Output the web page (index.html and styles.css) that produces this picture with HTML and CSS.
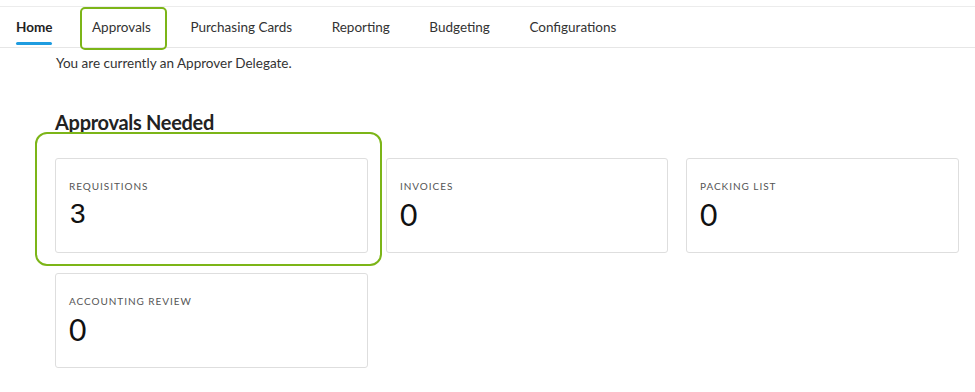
FILE: index.html
```html
<!DOCTYPE html>
<html lang="en">
<head>
    <meta charset="UTF-8">
    <meta name="viewport" content="width=device-width, initial-scale=1.0">
    <title>Approvals</title>
    <link rel="stylesheet" href="styles.css">
</head>
<body>
    <!-- top navigation -->
    <div class="nav">
        <a class="nav-item active"><span>Home</span></a>
        <a class="nav-item marked"><span>Approvals</span></a>
        <a class="nav-item"><span>Purchasing Cards</span></a>
        <a class="nav-item"><span>Reporting</span></a>
        <a class="nav-item"><span>Budgeting</span></a>
        <a class="nav-item"><span>Configurations</span></a>
    </div>

    <div class="content">
        <p class="notice">You are currently an Approver Delegate.</p>

        <h2 class="section-title">Approvals Needed</h2>

        <div class="cards">
            <div class="card marked">
                <div class="card-label">Requisitions</div>
                <div class="card-count alt">3</div>
            </div>
            <div class="card">
                <div class="card-label">Invoices</div>
                <div class="card-count">0</div>
            </div>
            <div class="card">
                <div class="card-label">Packing List</div>
                <div class="card-count">0</div>
            </div>
            <div class="card">
                <div class="card-label">Accounting Review</div>
                <div class="card-count">0</div>
            </div>
        </div>
    </div>
</body>
</html>
```

FILE: styles.css
```css
/* base */
body {
    font-family: 'Lato', 'Liberation Sans', sans-serif;
    margin: 0;
    padding: 0;
    background: #fff;
    color: #333;
}

/* navigation */
.nav {
    display: flex;
    gap: 39.5px;
    margin-top: 6px;
    padding-left: 16px;
    height: 40px;
    border-top: 1px solid #ececec;
    border-bottom: 1px solid #e6e6e6;
}
.nav-item {
    position: relative;
    display: flex;
    align-items: center;
    font-size: 13.5px;
    color: #333;
    cursor: pointer;
}
.nav-item span {
    position: relative;
    height: 40px;
    line-height: 40px;
}
.nav-item.active {
    font-weight: bold;
    color: #222;
}
.nav-item.active span::after {
    content: '';
    position: absolute;
    left: 0;
    right: 0;
    bottom: 2px;
    height: 3px;
    border-radius: 2px;
    background: #1e9ce0;
}
/* green highlight drawn over the Approvals tab */
.nav-item.marked::before {
    content: '';
    position: absolute;
    left: -12px;
    top: 0;
    width: 87px;
    height: 43px;
    box-sizing: border-box;
    border: 2px solid #7cb518;
    border-radius: 5px;
}

/* page body */
.content {
    padding-left: 55px;
}
.notice {
    margin: 6px 0 0 1px;
    font-size: 13.5px;
    line-height: 18px;
    color: #333;
}
.section-title {
    margin: 38px 0 0;
    font-size: 20px;
    line-height: 24px;
    font-weight: bold;
    color: #222;
    letter-spacing: -0.3px;
}

/* approval count cards */
.cards {
    display: grid;
    grid-template-columns: 313px 282px 273px;
    column-gap: 18px;
    row-gap: 20px;
    margin-top: 24px;
}
.card {
    position: relative;
    height: 95px;
    box-sizing: border-box;
    padding: 21px 13px 0;
    border: 1px solid #dedede;
    border-radius: 3px;
}
.card.marked::before {
    content: '';
    position: absolute;
    left: -21px;
    top: -27px;
    right: -15px;
    bottom: -14px;
    border: 2px solid #7cb518;
    border-radius: 12px;
}
.card-label {
    font-size: 10px;
    line-height: 12px;
    letter-spacing: 0.95px;
    text-transform: uppercase;
    color: #555;
}
.card-count {
    margin-top: 6px;
    font-size: 30px;
    line-height: 32px;
    color: #111;
}
.card-count.alt {
    font-family: 'Liberation Sans', sans-serif;
    font-size: 28px;
    padding-left: 1px;
}
```
